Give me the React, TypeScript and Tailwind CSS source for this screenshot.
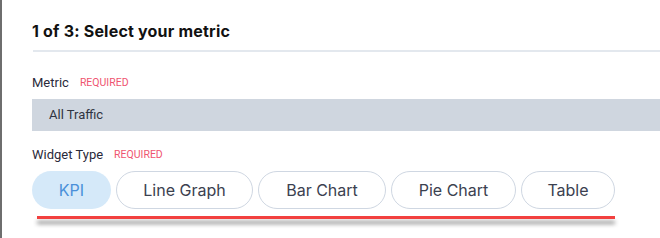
import React from "react";

const types = ["KPI", "Line Graph", "Bar Chart", "Pie Chart", "Table"];

export default function App() {
  return (
    <div
      className="w-[660px] h-[238px] bg-white overflow-hidden flex"
      style={{ fontFamily: "Inter, 'Noto Sans', sans-serif" }}
    >
      <div className="w-[2px] h-full bg-[#6e6e6e] shrink-0" />
      <div className="flex-1 pl-[30px] pt-[21px] flex flex-col">
        <h1 className="text-[16px] font-bold text-[#111] leading-[20px] tracking-[0.2px]">
          1 of 3: Select your metric
        </h1>
        <div className="h-[2px] bg-[#e3e8ee] mt-[9px] ml-[1px]" />
        <div
          className="mt-[23px] flex items-center gap-[11px] h-[16px]"
          style={{ fontFamily: "Roboto, 'Noto Sans', sans-serif" }}
        >
          <span className="text-[13px] text-[#2a2a3a]">Metric</span>
          <span className="text-[10.5px] text-[#ef5470]">REQUIRED</span>
        </div>
        <div className="mt-[8px] h-[32px] bg-[#cfd6df] flex items-center pl-[17px]">
          <span
            className="text-[13px] text-[#2f3441]"
            style={{ fontFamily: "Roboto, 'Noto Sans', sans-serif" }}
          >
            All Traffic
          </span>
        </div>
        <div
          className="mt-[16px] flex items-center gap-[11px] h-[16px]"
          style={{ fontFamily: "Roboto, 'Noto Sans', sans-serif" }}
        >
          <span className="text-[13px] text-[#2a2a3a]">Widget Type</span>
          <span className="text-[10.5px] text-[#ef5470]">REQUIRED</span>
        </div>
        <div className="mt-[8px] flex flex-col w-fit">
          <div className="flex gap-[5px]">
            {types.map((t, i) =>
              i === 0 ? (
                <div
                  key={t}
                  className="h-[38px] w-[79px] rounded-full bg-[#d5e9f9] flex items-center justify-center text-[16px] text-[#4a90d9]"
                >
                  {t}
                </div>
              ) : (
                <div
                  key={t}
                  className={`h-[38px] rounded-full border border-[#cfd7e2] bg-white flex items-center justify-center text-[16px] text-[#3b4150] ${
                    i === 1 ? "w-[137px]" : i === 2 ? "w-[128px]" : i === 3 ? "w-[125px]" : "w-[94px]"
                  }`}
                >
                  {t}
                </div>
              )
            )}
          </div>
          <div className="mt-[7px] ml-[5px] h-[3px] bg-[#f2403f] shadow-[0_5px_4px_rgba(0,0,0,0.45)]" />
        </div>
      </div>
    </div>
  );
}
